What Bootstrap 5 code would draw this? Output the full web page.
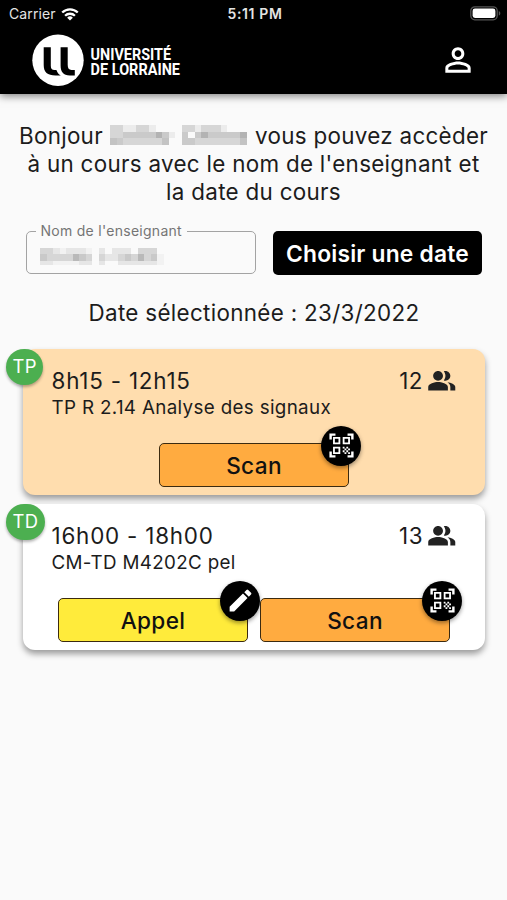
<!DOCTYPE html>
<html lang="fr">
<head>
<meta charset="utf-8">
<meta name="viewport" content="width=device-width, initial-scale=1">
<title>Université de Lorraine</title>
<link href="https://cdn.jsdelivr.net/npm/bootstrap@5.3.0/dist/css/bootstrap.min.css" rel="stylesheet">
<style>
  body { font-family: Inter, "Liberation Sans", sans-serif; background: #fafafa; color: #1c1c1c; min-height: 900px; overflow: hidden; }
  svg { display: block; flex: none; overflow: visible; }
  .topbar { background: #000; height: 93.5px; box-shadow: 0 2px 8px rgba(0,0,0,.5); }
  .status { height: 27px; padding: 0 6px 0 9px; font-size: 14px; letter-spacing: .1px; color: #e4e4e4; }
  .status > div { flex: 1 1 0; }
  .clock { font-size: 14px; font-weight: 600; letter-spacing: .6px; white-space: nowrap; }
  .brandbar { height: 65px; padding: 0 30px 0 32px; }
  .intro { font-size: 22.4px; line-height: 28px; letter-spacing: .3px; margin-top: 28.5px; white-space: nowrap; }
  .intro svg { display: inline-block; vertical-align: -1px; margin-left: 1px; }
  .filters { margin-top: 25px; padding-left: 25.5px; gap: 17.5px; }
  .field { width: 230px; height: 43px; border: 1.3px solid #a3a3a3; border-radius: 5px; padding: 16px 0 0 13px; }
  .field label { position: absolute; top: -10px; left: 9px; padding: 0 5px; background: #fafafa; font-size: 14px; line-height: 18px; letter-spacing: .28px; color: #757575; white-space: nowrap; }
  .pick { width: 209px; height: 44px; padding: 2px 0 0; background: #000; color: #fff; border-radius: 5px; font-size: 22.8px; font-weight: 600; letter-spacing: .2px; white-space: nowrap; }
  .chosen { font-size: 22.4px; line-height: 28px; letter-spacing: .32px; margin-top: 24px; padding-left: 1px; }
  .courses { margin: 22px 22px 0 23px; gap: 9.7px; }
  .course { height: 145.5px; border: 0; border-radius: 12px; box-shadow: 0 4px 6px rgba(0,0,0,.38); padding: 18px 28.5px 0 28.5px; color: #1c1c1c; }
  .tp { --bs-card-bg: #ffddae; }
  .td { --bs-card-bg: #fff; }
  .kind { position: absolute; left: -17px; top: 0; height: 36px; padding: 0 6.5px; border-radius: 20px; background: #4caf50; color: #fff; font-size: 18.4px; letter-spacing: .35px; box-shadow: 0 2px 3px rgba(0,0,0,.3); }
  .hours, .count { font-size: 22.4px; line-height: 28px; letter-spacing: .72px; }
  .hours { letter-spacing: .8px; }
  .count { letter-spacing: .5px; }
  .topic { font-size: 18.8px; line-height: 24px; letter-spacing: .34px; margin-top: 1px; white-space: nowrap; }
  .actions { gap: 12px; margin-top: 22.5px; }
  .act { width: 190px; height: 44.5px; padding: 3px 0 0; border: 1.3px solid #3b2a10; border-radius: 5px; font-size: 22.6px; font-weight: 500; letter-spacing: .35px; color: #111; }
  .scan { background: #ffab40; }
  .appel { background: #ffeb3b; }
  .dot { position: absolute; right: -13px; top: -18px; width: 40px; height: 40px; border-radius: 50%; background: #000; box-shadow: 0 2px 4px rgba(0,0,0,.4); }
</style>
<script src="https://cdn.jsdelivr.net/npm/bootstrap@5.3.0/dist/js/bootstrap.bundle.min.js"></script>
</head>
<body>
<svg width="0" height="0" class="position-absolute">
  <symbol id="qr" viewBox="0 0 24 24"><path d="M9.5 6.5v3h-3v-3h3M11 5H5v6h6V5zm-1.5 9.5v3h-3v-3h3M11 13H5v6h6v-6zm6.5-6.5v3h-3v-3h3M19 5h-6v6h6V5zm-6 8h1.5v1.5H13V13zm1.5 1.5H16V16h-1.5v-1.5zM16 13h1.5v1.5H16V13zm-3 3h1.5v1.5H13V16zm1.5 1.5H16V19h-1.5v-1.5zM16 16h1.5v1.5H16V16zm1.5-1.5H19V16h-1.5v-1.5zm0 3H19V19h-1.5v-1.5zM22 7h-2V4h-3V2h5v5zm0 15v-5h-2v3h-3v2h5zM2 22h5v-2H4v-3H2v5zM2 2v5h2V4h3V2H2z" fill="#fff"/></symbol>
  <symbol id="people" viewBox="0 0 24 24"><path d="M16.67 13.13C18.04 14.06 19 15.32 19 17v3h4v-3c0-2.18-3.57-3.47-6.33-3.87zM15 12c2.21 0 4-1.79 4-4s-1.79-4-4-4c-.47 0-.91.1-1.33.24C14.5 5.27 15 6.58 15 8s-.5 2.73-1.33 3.76c.42.14.86.24 1.33.24zM9 12c2.21 0 4-1.79 4-4s-1.79-4-4-4-4 1.79-4 4 1.79 4 4 4zM9 13c-2.67 0-8 1.34-8 4v3h16v-3c0-2.66-5.33-4-8-4z" fill="#222"/></symbol>
</svg>

<header class="topbar">
  <div class="status d-flex align-items-center">
    <div class="d-flex align-items-center"><span>Carrier</span>
      <svg class="ms-1" width="20" height="16" viewBox="-.8 -.8 21.6 17" fill="none" stroke="#fff" stroke-width="2.5"><path d="M1.6 6.1a12 12 0 0 1 16.8 0"/><path d="M4.7 9.6a7.6 7.6 0 0 1 10.6 0"/><path d="M10 14.8 6.9 11.8a4.4 4.4 0 0 1 6.2 0z" fill="#fff" stroke="none"/></svg>
    </div>
    <span class="clock">5:11 PM</span>
    <div class="d-flex justify-content-end">
      <svg width="31" height="15" viewBox="0 0 31 15"><rect x=".8" y=".8" width="26.4" height="13" rx="4" fill="none" stroke="#555" stroke-width="1.3"/><rect x="2.6" y="2.6" width="22.8" height="9.4" rx="2.4" fill="#fff"/><path d="M28.8 5v4.6c2-.8 2-3.8 0-4.6z" fill="#555"/></svg>
    </div>
  </div>
  <div class="brandbar d-flex align-items-center justify-content-between">
    <svg width="152" height="52" viewBox="32 34 152 52">
      <circle cx="58" cy="60.2" r="25.7" fill="#fff"/>
      <path d="M43.7 47.3H50.8V65.7Q50.8 70.1 54.4 70.1L56.4 70.1Q58.3 75.1 60.8 75.4H56C47.5 75.5 43.7 72.5 43.7 65.1zM60.6 47.3H67.7V64.7Q67.7 69.9 71.4 69.9H74.8V75.4H69.8C63.3 75.4 60.6 71.9 60.6 65.5z" fill="#000"/>
      <g font-family="Roboto, sans-serif" font-weight="700" font-size="17" letter-spacing="0" fill="#fff"><text x="90.6" y="60" textLength="80.4" lengthAdjust="spacingAndGlyphs">UNIVERSITÉ</text><text x="90.6" y="75" textLength="89.4" lengthAdjust="spacingAndGlyphs">DE LORRAINE</text></g>
    </svg>
    <svg width="38" height="38" viewBox="0 0 24 24"><path d="M12 5.9c1.16 0 2.1.94 2.1 2.1s-.94 2.1-2.1 2.1S9.9 9.16 9.9 8s.94-2.1 2.1-2.1m0 9c2.97 0 6.1 1.46 6.1 2.1v1.1H5.9V17c0-.64 3.13-2.1 6.1-2.1M12 4C9.79 4 8 5.79 8 8s1.79 4 4 4 4-1.79 4-4-1.79-4-4-4zm0 9c-2.67 0-8 1.34-8 4v3h16v-3c0-2.66-5.33-4-8-4z" fill="#fff"/></svg>
  </div>
</header>

<main>
  <p class="intro text-center mb-0">Bonjour <svg width="138" height="20" viewBox="0 0 21.2 3" preserveAspectRatio="none" shape-rendering="crispEdges">
      <path fill="#d6d6d6" d="M0 0h2v1H0zM4 0h2v1H4zM11 0h2v1h-2zM14 0h3v1h-3zM0 1h2v1H0zM2 2h7v1H2zM13 2h8v1h-8z"/>
      <path fill="#ececec" d="M2 0h2v1H2zM6 0h1v1H6zM13 0h1v1h-1zM9 1h1v1H9zM17 0h1v1h-1z"/>
      <path fill="#cacaca" d="M2 1h5v1H2zM8 1h1v1H8zM0 2h2v1H0zM11 1h1v1h-1zM13 1h8v1h-8zM11 2h2v1h-2z"/>
      <path fill="#b3b3b3" d="M7 1h1v1H7zM14 1h1v1h-1zM20 1h1v1h-1z"/>
      <path fill="#c3c3c3" d="M0 2h1v1H0zM8 2h1v1H8zM20 2h1v1h-1z"/>
    </svg> vous pouvez accèder<br>à un cours avec le nom de l'enseignant et<br>la date du cours</p>

  <div class="filters d-flex">
    <div class="field position-relative">
      <label>Nom de l'enseignant</label>
      <svg width="124" height="17" viewBox="0 0 19 2.7" preserveAspectRatio="none" shape-rendering="crispEdges">
        <path fill="#d6d6d6" d="M0 0h2v1H0zM0 1h8v1H0zM9 1h9v1H9zM15 0h3v1h-3z"/>
        <path fill="#e6e6e6" d="M2 0h1v1H2zM4 0h1v1H4zM5 0h2v1H5zM9 0h1v1H9zM11 0h3v1h-3zM10 1h2v1h-2zM0 2h2v.7H0zM6 2h2v.7H6zM9 2h1v.7H9zM12 2h6v.7h-6z"/>
        <path fill="#f2f2f2" d="M3 0h1v1H3zM7 0h1v1H7zM2 2h4v.7H2zM18 1h1v1.7h-1z"/>
        <path fill="#b9b9b9" d="M5 1h1v1H5zM15 1h1v1h-1z"/>
        <path fill="#c9c9c9" d="M0 1h1v1H0zM6 1h1v1H6zM13 1h1v1h-1zM17 1h1v1h-1z"/>
      </svg>
    </div>
    <button class="btn pick" type="button">Choisir une date</button>
  </div>

  <p class="chosen text-center mb-0">Date sélectionnée : 23/3/2022</p>

  <div class="courses d-flex flex-column">
    <article class="card course tp">
      <span class="kind d-flex align-items-center">TP</span>
      <div class="d-flex justify-content-between">
        <span class="hours">8h15 - 12h15</span>
        <span class="count d-flex">12<svg class="ms-1" width="29.5" height="28"><use href="#people" width="29.5" height="29.5" y="-1"/></svg></span>
      </div>
      <div class="topic">TP R 2.14 Analyse des signaux</div>
      <div class="actions d-flex justify-content-center">
        <button class="btn act scan position-relative" type="button">Scan<span class="dot d-flex align-items-center justify-content-center"><svg width="29" height="29"><use href="#qr"/></svg></span></button>
      </div>
    </article>
    <article class="card course td">
      <span class="kind d-flex align-items-center">TD</span>
      <div class="d-flex justify-content-between">
        <span class="hours">16h00 - 18h00</span>
        <span class="count d-flex">13<svg class="ms-1" width="29.5" height="28"><use href="#people" width="29.5" height="29.5" y="-1"/></svg></span>
      </div>
      <div class="topic">CM-TD M4202C pel</div>
      <div class="actions d-flex justify-content-center">
        <button class="btn act appel position-relative" type="button">Appel<span class="dot d-flex align-items-center justify-content-center"><svg width="29" height="29" viewBox="0 0 24 24"><path d="M3 17.25V21h3.75L17.81 9.94l-3.75-3.75L3 17.25zM20.71 7.04a1 1 0 0 0 0-1.41l-2.34-2.34a1 1 0 0 0-1.41 0l-1.83 1.83 3.75 3.75 1.83-1.83z" fill="#fff"/></svg></span></button>
        <button class="btn act scan position-relative" type="button">Scan<span class="dot d-flex align-items-center justify-content-center"><svg width="29" height="29"><use href="#qr"/></svg></span></button>
      </div>
    </article>
  </div>
</main>
</body>
</html>
